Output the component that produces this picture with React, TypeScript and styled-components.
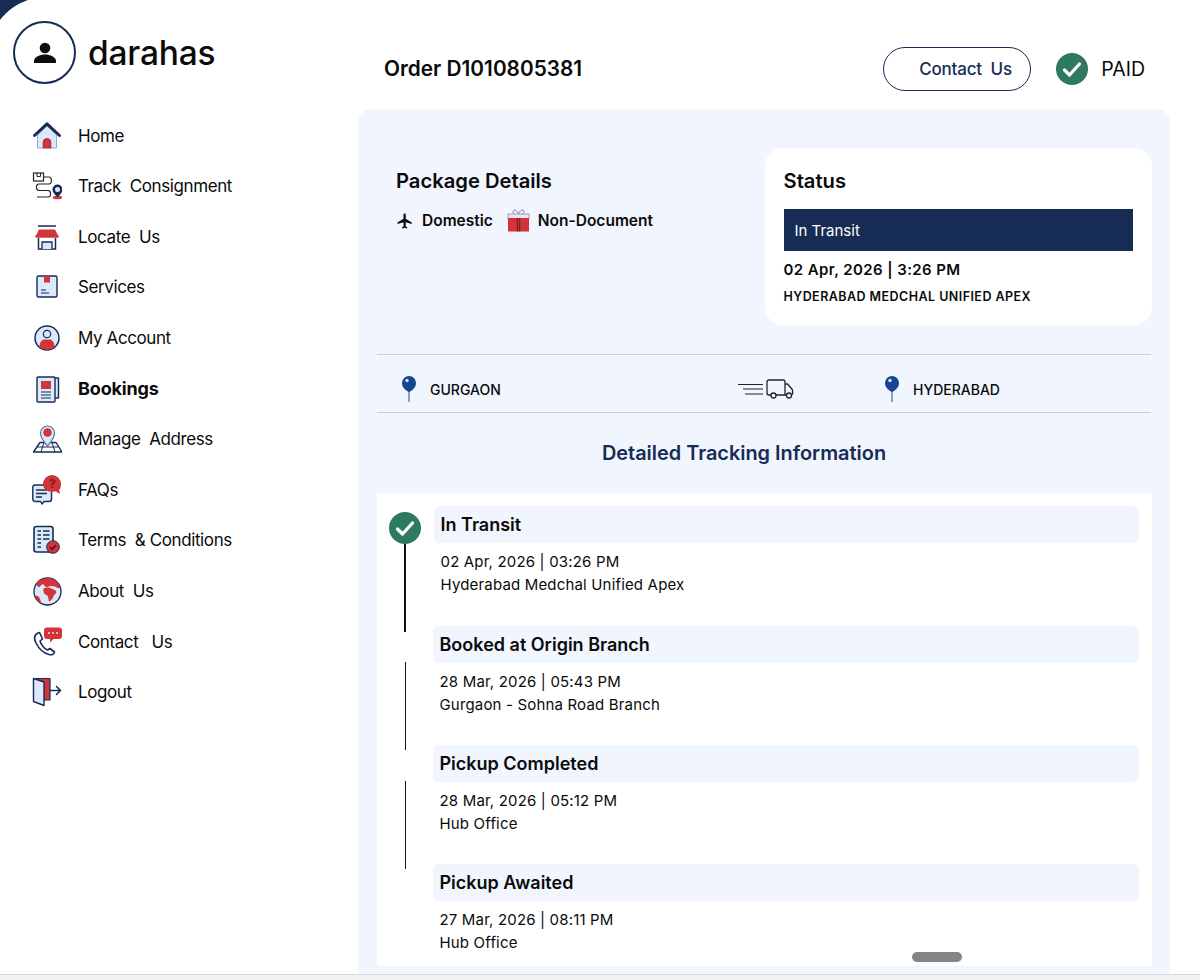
import * as React from "react";
import styled, { createGlobalStyle } from "styled-components";
import { MdFlight } from "react-icons/md";

const NAVY = "#162c54";
const RED = "#d3343a";
const LIGHT = "#dce9fb";
const GREEN = "#2f7a5f";

const GlobalStyle = createGlobalStyle`
  html, body {
    margin: 0;
    height: 980px;
    overflow: hidden;
    background: #fff;
    font-family: Inter, "Liberation Sans", sans-serif;
    color: #0b0b0b;
  }
`;

const Page = styled.div`
  position: relative;
  display: flex;
  height: 974px;
  overflow: hidden;
`;

const Corner = styled.svg`
  position: absolute;
  top: 0;
  left: 0;
`;

const BottomStrip = styled.div`
  height: 6px;
  background: #f1f1ef;
  border-top: 1px solid #d8d8d8;
  box-sizing: border-box;
`;

const ScrollHandle = styled.div`
  position: absolute;
  left: 912px;
  top: 952px;
  width: 50px;
  height: 10px;
  border-radius: 5px;
  background: #858585;
`;

const Sidebar = styled.aside`
  flex: 0 0 358px;
  box-sizing: border-box;
  padding: 21px 0 0 13px;
`;

const Profile = styled.div`
  display: flex;
  align-items: center;
  gap: 12px;
  height: 63px;
`;

const Avatar = styled.div`
  width: 63px;
  height: 63px;
  box-sizing: border-box;
  border: 2px solid ${NAVY};
  border-radius: 50%;
  display: flex;
  align-items: center;
  justify-content: center;
`;

const UserName = styled.div`
  font-size: 33.5px;
  font-weight: 500;
  letter-spacing: -0.2px;
`;

const Nav = styled.nav`
  margin-top: 26.3px;
  padding-left: 19px;
`;

const NavItem = styled.div<{ $active?: boolean }>`
  display: flex;
  align-items: center;
  gap: 16px;
  height: 50.6px;
  font-size: ${(p) => (p.$active ? 18 : 17)}px;
  font-weight: ${(p) => (p.$active ? 700 : 400)};
  letter-spacing: ${(p) => (p.$active ? -0.15 : -0.4)}px;
  white-space: pre;
`;

const Main = styled.main`
  flex: 0 0 812px;
  display: flex;
  flex-direction: column;
`;

const TopBar = styled.header`
  flex: 0 0 109px;
  display: flex;
  align-items: center;
  box-sizing: border-box;
  padding: 28px 25px 0 26px;
`;

const OrderTitle = styled.h1`
  flex: 1;
  margin: 0;
  font-size: 20.8px;
  font-weight: 600;
`;

const ContactButton = styled.button`
  width: 148px;
  height: 44px;
  box-sizing: border-box;
  padding: 0 0 0 35px;
  text-align: left;
  background: #fff;
  border: 1.5px solid ${NAVY};
  border-radius: 22px;
  color: ${NAVY};
  font: 500 17px Inter, "Liberation Sans", sans-serif;
  letter-spacing: -0.2px;
  white-space: pre;
`;

const PaidBadge = styled.div`
  display: flex;
  align-items: center;
  gap: 13px;
  margin-left: 25px;
  font-size: 19.5px;
`;

const Panel = styled.section`
  flex: 1;
  min-height: 0;
  display: flex;
  flex-direction: column;
  box-sizing: border-box;
  padding: 39px 18px 8px 19px;
  background: #f0f5fe;
  border-radius: 14px 14px 0 0;
`;

const Summary = styled.div`
  display: flex;
  justify-content: space-between;
  align-items: flex-start;
`;

const PackageBlock = styled.div`
  padding: 21px 0 0 19px;
`;

const BlockTitle = styled.h2`
  margin: 0;
  font-size: 20.2px;
  line-height: 24px;
  font-weight: 600;
`;

const PackageTags = styled.div`
  display: flex;
  align-items: center;
  margin-top: 16px;
  font-size: 15.5px;
  font-weight: 600;
`;

const Tag = styled.span`
  display: flex;
  align-items: center;
  gap: 8px;
  margin-right: 14px;
`;

const StatusCard = styled.div`
  width: 387px;
  height: 177px;
  box-sizing: border-box;
  padding: 21px 19px 21px 18.5px;
  background: #fff;
  border-radius: 18px;
`;

const StatusBar = styled.div`
  display: flex;
  align-items: center;
  height: 42px;
  margin-top: 16px;
  padding-left: 11px;
  background: ${NAVY};
  color: #fff;
  font-size: 15px;
`;

const StatusDate = styled.div`
  margin-top: 9px;
  font-size: 15px;
  line-height: 20px;
  font-weight: 600;
  letter-spacing: 0.4px;
`;

const StatusPlace = styled.div`
  margin-top: 9px;
  font-size: 12.5px;
  line-height: 16px;
  font-weight: 600;
  letter-spacing: 0.45px;
`;

const RouteRow = styled.div`
  display: grid;
  grid-template-columns: 335px 148px 1fr;
  align-items: center;
  height: 59px;
  box-sizing: border-box;
  margin: 29px 1px 0 0;
  padding: 11px 0 0 25px;
  border-top: 1.5px solid #c9d0dc;
  border-bottom: 1.5px solid #c9d0dc;
`;

const RoutePoint = styled.div`
  display: flex;
  align-items: center;
  gap: 14px;
  font-size: 14px;
  font-weight: 500;
`;

const TrackingTitle = styled.h2`
  margin: 28px 0;
  padding-right: 41px;
  text-align: center;
  font-size: 19.9px;
  line-height: 24px;
  font-weight: 600;
  color: ${NAVY};
`;

const TimelineCard = styled.div`
  flex: 1;
  min-height: 0;
  overflow: hidden;
  box-sizing: border-box;
  padding: 13px 13px 0 0;
  background: #fff;
`;

const TimelineRow = styled.div<{ $first?: boolean }>`
  display: flex;
  height: ${(p) => (p.$first ? 120 : 119)}px;
`;

const Rail = styled.div<{ $first?: boolean }>`
  flex: 0 0 56px;
  display: flex;
  flex-direction: column;
  align-items: center;
  padding-top: ${(p) => (p.$first ? 6 : 36)}px;
`;

const RailLine = styled.div<{ $first?: boolean }>`
  flex: 0 0 88px;
  width: ${(p) => (p.$first ? 1.5 : 1)}px;
  background: #111;
`;

const RowBody = styled.div<{ $first?: boolean }>`
  flex: 1;
  margin-left: ${(p) => (p.$first ? 1 : 0)}px;
`;

const RowHeading = styled.div`
  display: flex;
  align-items: center;
  height: 37px;
  padding-left: 6.5px;
  background: #f0f5fe;
  border-radius: 6px;
  font-size: 18px;
  font-weight: 600;
`;

const RowText = styled.div`
  margin-top: 8px;
  padding-left: 6.5px;
  font-size: 15px;
  line-height: 22.5px;
  letter-spacing: 0.17px;
`;

const Svg: React.FC<{ size?: number; w?: number; h?: number; view?: string; children: React.ReactNode }> = ({
  size = 30,
  w,
  h,
  view = "0 0 30 30",
  children,
}) => (
  <svg width={w ?? size} height={h ?? size} viewBox={view} fill="none" style={{ flex: "none" }}>
    {children}
  </svg>
);

const CheckCircle: React.FC<{ size: number }> = ({ size }) => (
  <Svg size={size} view="0 0 32 32">
    <circle cx="16" cy="16" r="16" fill={GREEN} />
    <path d="M8.5 17l5 5 10-11" stroke="#fff" strokeWidth="3.2" strokeLinecap="round" strokeLinejoin="round" />
  </Svg>
);

const Pin = () => (
  <Svg w={14} h={26} view="0 0 14 26">
    <path d="M7 14v12" stroke="#3f66a8" strokeWidth="1.2" />
    <path d="M7 0a7 7 0 0 1 7 7c0 3.6-2.6 7-7 9-4.4-2-7-5.400-7-9a7 7 0 0 1 7-7z" fill="#17458f" />
    <circle cx="5" cy="4.500" r="1.700" fill="#dbe6f7" />
  </Svg>
);

const MovingTruck = () => (
  <Svg w={57} h={20} view="0 0 57 20">
    <path d="M1 5.500h25M6 10h20M8 15h18" stroke="#222" strokeWidth="1.2" />
    <path
      d="M34 16h-2a2 2 0 0 1-2-2V3a2 2 0 0 1 2-2h14a2 2 0 0 1 2 2v13H39M48 5h2.500l4 4.500c.8.900 1.100 1.500 1.100 2.500v2.500c0 1-.6 1.500-1.600 1.500"
      stroke="#222"
      strokeWidth="1.300"
      strokeLinejoin="round"
    />
    <path d="M48 16h2" stroke="#222" strokeWidth="1.300" />
    <circle cx="36.500" cy="16.500" r="2.500" fill="#f0f5fe" stroke="#222" strokeWidth="1.300" />
    <circle cx="52" cy="16.500" r="2.500" fill="#f0f5fe" stroke="#222" strokeWidth="1.300" />
  </Svg>
);

const GiftIcon = () => (
  <Svg w={23} h={23} view="0 0 23 23">
    <path d="M7.500 5C5 3 6 .8 8 1c1.500.2 3 2.500 3.500 4 .5-1.500 2-3.800 3.500-4 2-.2 3 2 .5 4" stroke="#7d7ea6" strokeWidth="1" />
    <rect x="1" y="5" width="21" height="5" fill="#e9e6f4" stroke="#8b8bb0" strokeWidth="0.8" />
    <rect x="1" y="9" width="21" height="13.500" fill={RED} />
    <rect x="9.800" y="9" width="1.300" height="13.500" fill="#7c1f26" />
    <rect x="12" y="9" width="1.300" height="13.500" fill="#7c1f26" />
  </Svg>
);

const PersonIcon = () => (
  <Svg size={26} view="0 0 26 26">
    <circle cx="13" cy="8" r="5.300" fill="#0d0d0d" />
    <path d="M2 23v-2c0-4 6-6.500 11-6.500S24 17 24 21v2z" fill="#0d0d0d" />
  </Svg>
);

const stroke = { stroke: NAVY, strokeWidth: 1.4, strokeLinejoin: "round" as const, strokeLinecap: "round" as const };

const navIcons: Record<string, React.ReactNode> = {
  home: (
    <>
      <path d="M5.500 14v13h19V14L15 5z" fill={LIGHT} stroke="#8b97b5" strokeWidth="0.8" />
      <path d="M11 27v-5.500a4 4 0 0 1 8 0V27z" fill={RED} stroke="#7c1f26" strokeWidth="0.6" />
      <path d="M2.500 14.500L15 2.800l12.500 11.700" stroke={NAVY} strokeWidth="3" strokeLinejoin="round" strokeLinecap="round" />
    </>
  ),
  track: (
    <>
      <path d="M11 6h6c3.200 0 3.200 7 0 7H7c-3.500 0-3.500 6.500 0 6.500h9c3.500 0 3.500 6.500 0 6.500H5" stroke="#222" strokeWidth="1.100" />
      <rect x="1.500" y="2" width="10" height="8" fill="#fff" stroke="#222" strokeWidth="1.200" />
      <path d="M5 2v3.500h3.500V2" stroke="#222" strokeWidth="1" />
      <ellipse cx="25.500" cy="26.500" rx="4.800" ry="1.800" fill={RED} />
      <path d="M25.500 26c-3-2.500-5-5-5-7.500a5 5 0 0 1 10 0c0 2.500-2 5-5 7.500z" fill={NAVY} />
      <circle cx="25.500" cy="18.500" r="2.500" fill={LIGHT} />
    </>
  ),
  locate: (
    <>
      <path d="M6 4h18" stroke={NAVY} strokeWidth="1.500" />
      <path d="M7 7.500h16l3.500 7H3.500z" fill={RED} />
      <path d="M3.500 14.500h23" stroke={RED} strokeWidth="2.500" />
      <path d="M6.500 16v11h17V16" stroke={NAVY} strokeWidth="1.500" fill="#fff" />
      <path d="M10 27v-7h10v7" stroke={NAVY} strokeWidth="1.300" fill={LIGHT} />
    </>
  ),
  services: (
    <>
      <rect x="5" y="4" width="20" height="21" rx="1.500" fill={LIGHT} {...stroke} />
      <rect x="12" y="4" width="6" height="6.500" fill={RED} />
      <path d="M9 18h5M9 21h8" stroke={NAVY} strokeWidth="1.200" />
    </>
  ),
  account: (
    <>
      <circle cx="15" cy="15" r="12" fill={LIGHT} stroke={NAVY} strokeWidth="1.500" />
      <circle cx="15" cy="11" r="3.700" fill={LIGHT} stroke={NAVY} strokeWidth="1.200" />
      <path d="M7.500 24c0-5 2.500-7.500 5-7.500h5c2.500 0 5 2.500 5 7.500-4 3.500-11 3.500-15 0z" fill={RED} />
    </>
  ),
  bookings: (
    <>
      <path d="M22 4h4.500v20H22" fill={LIGHT} {...stroke} />
      <rect x="5" y="3" width="18" height="25" rx="1" fill={LIGHT} {...stroke} />
      <rect x="9" y="7" width="10" height="8" fill={RED} />
      <path d="M9 18h10M9 21h10M9 24h10" stroke={NAVY} strokeWidth="1.100" />
    </>
  ),
  address: (
    <>
      <path d="M8 18.500h16l6 9.500H1.500z" fill="#fff" {...stroke} />
      <path d="M5 23h21.500M12 18.500l-3 9.500M20 18.500l3 9.500" stroke={NAVY} strokeWidth="1" />
      <path d="M15.500 22c-4-4.500-7-8-7-13a7 7 0 0 1 14 0c0 5-3 8.500-7 13z" fill={LIGHT} stroke="#55709f" strokeWidth="1.200" />
      <circle cx="15.500" cy="8.500" r="4.300" fill={RED} />
    </>
  ),
  faq: (
    <>
      <path d="M3 10h14a2.500 2.500 0 0 1 2.500 2.500V24a2.500 2.500 0 0 1-2.500 2.500h-5L10 29l-1.500-2.500H3A2.500 2.500 0 0 1 .8 24V12.500A2.500 2.500 0 0 1 3 10z" fill={LIGHT} {...stroke} />
      <path d="M4 15h11M4 18.500h11M4 22h6" stroke={NAVY} strokeWidth="1.300" />
      <path d="M20 0a9 9 0 0 1 9 9c0 2.500-.6 4.500-1.800 6l.8 4-4.500-2.800C17 18 11 15 11 9a9 9 0 0 1 9-9z" fill={RED} />
      <text x="17" y="13" fontSize="12" fontWeight="700" fill="#7c1f26" fontFamily="Inter, sans-serif">?</text>
    </>
  ),
  terms: (
    <>
      <rect x="2" y="1.500" width="19" height="25.500" rx="2.500" fill={LIGHT} stroke={NAVY} strokeWidth="1.600" />
      <path d="M5.500 6h3.500M11 6h6.500M5.500 10h3.500M11 10h6.500M5.500 14h3.500M11 14h6.500M5.500 18h3.500M5.500 22h3.500" stroke={NAVY} strokeWidth="1.600" />
      <circle cx="21" cy="22" r="6.300" fill={RED} stroke={NAVY} strokeWidth="1" />
      <path d="M18 22l2.200 2.200 3.800-4" stroke="#3a1015" strokeWidth="1.400" />
    </>
  ),
  about: (
    <>
      <circle cx="15.500" cy="15.500" r="13.500" fill={LIGHT} stroke={NAVY} strokeWidth="1.300" />
      <path d="M5 6.500C9 2 16 .8 22 3.500c3 1.500 5.500 5 6.300 8.500-2.300.5-3.800-.5-5.300-1.500-2-.5-5-1-7 .5-2 1-3-1-4-2-1-1.500-2.500-.5-3.500 1C7 12 4.500 11 5 6.500z" fill={RED} />
      <path d="M11.500 12.500c2-1.500 5.500-1.500 8 0 2 1 4.500 1.500 5 3.500-1 2.500-3 3-3.500 5.500-1 2-2.500 3.500-4 4-1-3-.5-5.500-2.500-6.500-2-.5-3.500-3-3-6.500z" fill={RED} />
      <path d="M3 20c2-1 4 0 5 3l1.500 4.500C6.500 26 4 23.500 3 20z" fill={RED} />
    </>
  ),
  contact: (
    <>
      <path
        d="M6 6c-4 2-4 6-2 10 2.500 5 7 10 13 11.500 2.500.6 5 0 5.500-2.500l-4.500-3.500-2.500 1.500c-3-1-6.500-5.500-7.500-9l2.500-2L7.500 5.500z"
        fill="#fff"
        stroke={NAVY}
        strokeWidth="1.600"
        strokeLinejoin="round"
      />
      <path d="M15 .5h12a3 3 0 0 1 3 3V9a3 3 0 0 1-3 3h-5.500L18 15.500V12h-3a3 3 0 0 1-3-3V3.500a3 3 0 0 1 3-3z" fill={RED} />
      <circle cx="17" cy="6" r="1" fill="#f4dcdc" />
      <circle cx="21" cy="6" r="1" fill="#f4dcdc" />
      <circle cx="25" cy="6" r="1" fill="#f4dcdc" />
    </>
  ),
  logout: (
    <>
      <path d="M4 1.500h14v21.500H9z" fill={RED} stroke={NAVY} strokeWidth="1.200" strokeLinejoin="round" />
      <path d="M1.500 1.500l10.500 3.500v23.500L1.500 24.500z" fill={LIGHT} {...stroke} />
      <path d="M18.500 13.500H28.500M24.500 9.500l4 4-4 4" {...stroke} strokeWidth={1.600} />
    </>
  ),
};

const menu = [
  { key: "home", label: "Home" },
  { key: "track", label: "Track  Consignment" },
  { key: "locate", label: "Locate  Us" },
  { key: "services", label: "Services" },
  { key: "account", label: "My Account" },
  { key: "bookings", label: "Bookings", active: true },
  { key: "address", label: "Manage  Address" },
  { key: "faq", label: "FAQs" },
  { key: "terms", label: "Terms  & Conditions" },
  { key: "about", label: "About  Us" },
  { key: "contact", label: "Contact   Us" },
  { key: "logout", label: "Logout" },
];

const events = [
  { title: "In Transit", date: "02 Apr, 2026 | 03:26 PM", place: "Hyderabad Medchal Unified Apex" },
  { title: "Booked at Origin Branch", date: "28 Mar, 2026 | 05:43 PM", place: "Gurgaon - Sohna Road Branch" },
  { title: "Pickup Completed", date: "28 Mar, 2026 | 05:12 PM", place: "Hub Office" },
  { title: "Pickup Awaited", date: "27 Mar, 2026 | 08:11 PM", place: "Hub Office" },
];

const App: React.FC = () => (
  <React.Fragment>
    <GlobalStyle />
    <Page>
      <Corner width="28" height="20" viewBox="0 0 28 20">
        <path d="M0 0h28C16 4 7 11 0 20z" fill={NAVY} />
      </Corner>
      <Sidebar>
        <Profile>
          <Avatar>
            <PersonIcon />
          </Avatar>
          <UserName>darahas</UserName>
        </Profile>
        <Nav>
          {menu.map((item) => (
            <NavItem key={item.key} $active={item.active}>
              <Svg>{navIcons[item.key]}</Svg>
              {item.label}
            </NavItem>
          ))}
        </Nav>
      </Sidebar>
      <Main>
        <TopBar>
          <OrderTitle>Order D1010805381</OrderTitle>
          <ContactButton>{"Contact  Us"}</ContactButton>
          <PaidBadge>
            <CheckCircle size={32} />
            PAID
          </PaidBadge>
        </TopBar>
        <Panel>
          <Summary>
            <PackageBlock>
              <BlockTitle>Package Details</BlockTitle>
              <PackageTags>
                <Tag>
                  <MdFlight size={18} />
                  Domestic
                </Tag>
                <Tag>
                  <GiftIcon />
                  Non-Document
                </Tag>
              </PackageTags>
            </PackageBlock>
            <StatusCard>
              <BlockTitle>Status</BlockTitle>
              <StatusBar>In Transit</StatusBar>
              <StatusDate>02 Apr, 2026 | 3:26 PM</StatusDate>
              <StatusPlace>HYDERABAD MEDCHAL UNIFIED APEX</StatusPlace>
            </StatusCard>
          </Summary>
          <RouteRow>
            <RoutePoint>
              <Pin />
              GURGAON
            </RoutePoint>
            <MovingTruck />
            <RoutePoint>
              <Pin />
              HYDERABAD
            </RoutePoint>
          </RouteRow>
          <TrackingTitle>Detailed Tracking Information</TrackingTitle>
          <TimelineCard>
            {events.map((ev, i) => (
              <TimelineRow key={ev.title} $first={i === 0}>
                <Rail $first={i === 0}>
                  {i === 0 && <CheckCircle size={32} />}
                  {i < 3 && <RailLine $first={i === 0} />}
                </Rail>
                <RowBody $first={i === 0}>
                  <RowHeading>{ev.title}</RowHeading>
                  <RowText>
                    {ev.date}
                    <br />
                    {ev.place}
                  </RowText>
                </RowBody>
              </TimelineRow>
            ))}
          </TimelineCard>
        </Panel>
      </Main>
      <ScrollHandle />
    </Page>
    <BottomStrip />
  </React.Fragment>
);

export default App;
